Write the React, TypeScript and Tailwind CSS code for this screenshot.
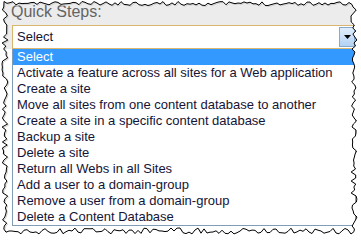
import React from 'react';

const options = [
  'Select',
  'Activate a feature across all sites for a Web application',
  'Create a site',
  'Move all sites from one content database to another',
  'Create a site in a specific content database',
  'Backup a site',
  'Delete a site',
  'Return all Webs in all Sites',
  'Add a user to a domain-group',
  'Remove a user from a domain-group',
  'Delete a Content Database',
];

// jagged "torn paper" outline around the screenshot
function tornOutline(): string {
  let seed = 11;
  const rand = () => {
    seed = (seed * 16807) % 2147483647;
    return seed / 2147483647;
  };
  const pts: [number, number][] = [];
  for (let x = 4; x <= 354; x += 3) pts.push([x, 1.5 + rand() * 4]);
  for (let y = 7; y <= 229; y += 3) pts.push([351 + rand() * 6, y]);
  for (let x = 354; x >= 4; x -= 3) pts.push([x, 228 + rand() * 6]);
  for (let y = 229; y >= 7; y -= 3) pts.push([2 + rand() * 6, y]);
  return 'M' + pts.map(([x, y]) => `${x.toFixed(1)} ${y.toFixed(1)}`).join('L') + 'Z';
}

const outline = tornOutline();

const TornEdge = () => (
  <svg className="absolute inset-0 pointer-events-none" width={361} height={241} viewBox="0 0 361 241">
    <path d={outline} fill="none" stroke="#d0d0d0" strokeWidth={1} transform="translate(1 1)" />
    <path d={`M0 0H361V241H0Z ${outline}`} fill="#ffffff" fillRule="evenodd" />
    <path d={outline} fill="none" stroke="#000000" strokeWidth={1} />
  </svg>
);

export default function App() {
  return (
    <div className="relative w-[361px] h-[241px] overflow-hidden bg-white font-['Liberation_Sans',Arial,sans-serif]">
      <div className="bg-[#ececec]">
        <div className="h-[25px] pl-[11px] pt-[3px] text-[16px] leading-[18px] text-[#646464]">Quick Steps:</div>
        <div className="ml-[12px] w-[344px] h-[24px] border border-[#d9b56e] bg-white flex items-center justify-between pl-[4px] text-[13px] text-[#141436]">
          <span className="leading-[16px]">Select</span>
          <div className="w-[16px] h-[20px] border border-[#85a9d0] bg-gradient-to-b from-[#e1eefc] to-[#b3d2f3] flex items-center justify-center">
            <svg width="7" height="4" viewBox="0 0 7 4">
              <path d="M0 0H7L3.5 4Z" fill="#000" />
            </svg>
          </div>
        </div>
      </div>
      <div className="ml-[12px] w-[344px] border-x border-b border-[#7f9db9] bg-white">
        {options.map((o, i) => (
          <div
            key={o}
            className={
              i === 0
                ? 'h-[16px] leading-[16px] pl-[4px] text-[13px] whitespace-nowrap bg-[#3399ff] text-white'
                : 'h-[16px] leading-[16px] pl-[4px] text-[13px] whitespace-nowrap text-[#141436]'
            }
          >
            {o}
          </div>
        ))}
      </div>
      <TornEdge />
    </div>
  );
}
